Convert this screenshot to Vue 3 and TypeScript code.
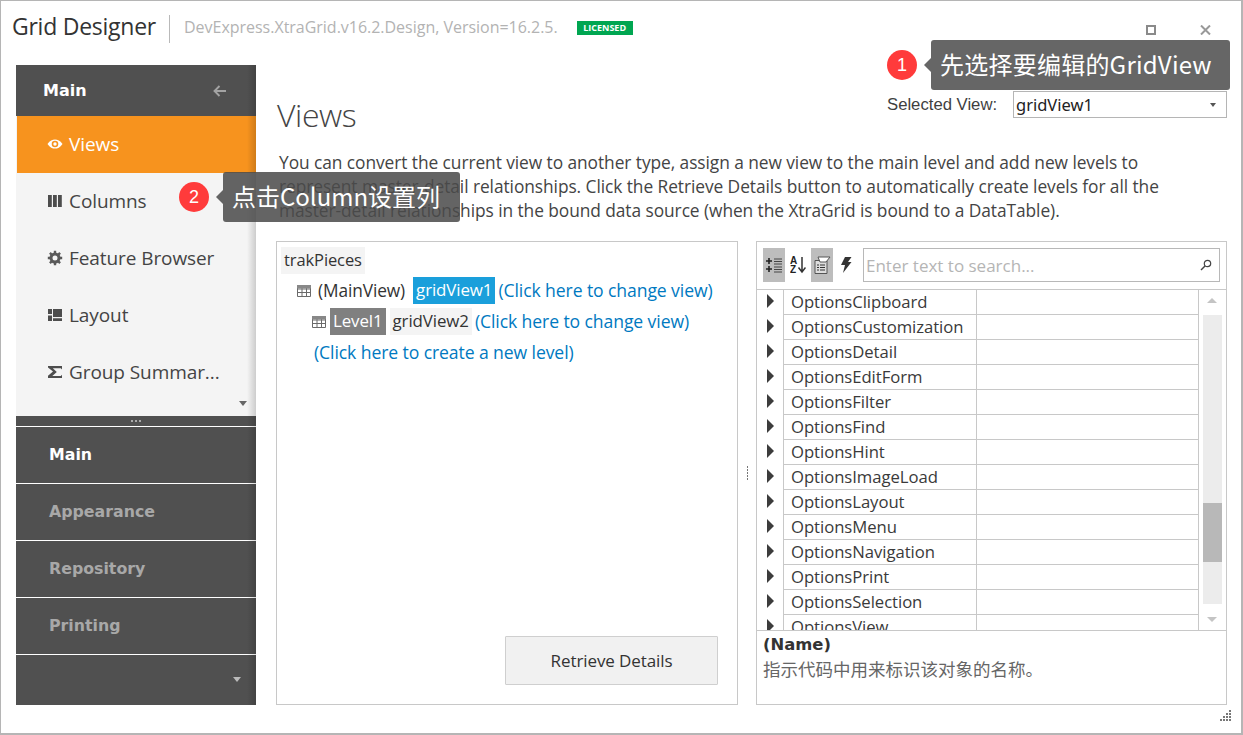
<script setup lang="ts">
const navItems = [
  { label: 'Views', icon: 'eye', active: true },
  { label: 'Columns', icon: 'cols', active: false },
  { label: 'Feature Browser', icon: 'gear', active: false },
  { label: 'Layout', icon: 'layout', active: false },
  { label: 'Group Summar...', icon: 'sigma', active: false },
]
const groups = [
  { label: 'Main', on: true },
  { label: 'Appearance', on: false },
  { label: 'Repository', on: false },
  { label: 'Printing', on: false },
]
const props = [
  'OptionsClipboard', 'OptionsCustomization', 'OptionsDetail', 'OptionsEditForm', 'OptionsFilter',
  'OptionsFind', 'OptionsHint', 'OptionsImageLoad', 'OptionsLayout', 'OptionsMenu',
  'OptionsNavigation', 'OptionsPrint', 'OptionsSelection', 'OptionsView',
]
</script>

<template>
  <div class="window">
    <header class="titlebar">
      <h1 class="app-title">Grid Designer</h1>
      <span class="title-sep"></span>
      <span class="version">DevExpress.XtraGrid.v16.2.Design, Version=16.2.5.</span>
      <span class="licensed">LICENSED</span>
      <div class="win-btns">
        <svg width="10" height="10" viewBox="0 0 10 10"><rect x="1" y="1" width="8" height="8" fill="none" stroke="#8a8a8a" stroke-width="2" /></svg>
        <svg width="11" height="10" viewBox="0 0 11 10"><path d="M1 .5l9 9M10 .5l-9 9" stroke="#999" stroke-width="2" fill="none" /></svg>
      </div>
    </header>

    <div class="body">
      <aside class="sidebar">
        <div class="side-head">
          <span>Main</span>
          <svg width="14" height="12" viewBox="0 0 14 12"><path d="M13 6H2M6.500 1 1.500 6l5 5" fill="none" stroke="#a3a3a3" stroke-width="1.900" /></svg>
        </div>
        <nav class="nav">
          <div v-for="it in navItems" :key="it.label" class="nav-item" :class="{ active: it.active }">
            <svg class="nav-icon" width="16" height="16" viewBox="0 0 16 16">
              <template v-if="it.icon === 'eye'">
                <path d="M.5 8C3 4.300 5.500 3.400 8 3.400S13 4.300 15.500 8C13 11.700 10.500 12.600 8 12.600S3 11.700.5 8Z" fill="#fff" />
                <circle cx="8" cy="8" r="3.300" fill="#f7931e" /><circle cx="8" cy="8" r="1.700" fill="#fff" />
              </template>
              <path v-else-if="it.icon === 'cols'" d="M1 2h3.800v12H1zM6 2h3.800v12H6zM11 2h3.800v12H11z" fill="#4d4d4d" />
              <template v-else-if="it.icon === 'gear'">
                <circle cx="8" cy="8" r="4" fill="none" stroke="#595959" stroke-width="3" />
                <path d="M8 .8v3M8 12.200v3M.8 8h3M12.200 8h3M2.900 2.900 5 5M11 11l2.100 2.100M13.100 2.900 11 5M5 11l-2.100 2.100" stroke="#595959" stroke-width="2.400" />
              </template>
              <path v-else-if="it.icon === 'layout'" d="M1 2h4v5H1zM6 2h9v8H6zM1 8.500h4V14H1zM6 11.300h9V14H6z" fill="#4d4d4d" />
              <path v-else d="M1 2h14v3.500l-1.200-1.300H5.800L9.800 8l-4.500 4h8.500l1.200-1.200V14H1v-2.200l5-4.300L1 3.500z" fill="#4d4d4d" />
            </svg>
            <span>{{ it.label }}</span>
          </div>
          <i class="nav-more"></i>
        </nav>
        <div class="splitter">
          <span></span><span></span><span></span>
        </div>
        <div v-for="g in groups" :key="g.label" class="group" :class="{ on: g.on }">{{ g.label }}</div>
        <div class="side-foot"><i></i></div>
      </aside>

      <main class="content">
        <div class="content-top">
          <h2 class="page-title">Views</h2>
          <div class="selector">
            <label>Selected View:</label>
            <div class="combo"><span>gridView1</span><i></i></div>
          </div>
        </div>
        <p class="desc">You can convert the current view to another type, assign a new view to the main level and add new levels to represent master-detail relationships. Click the Retrieve Details button to automatically create levels for all the master-detail relationships in the bound data source (when the XtraGrid is bound to a DataTable).</p>

        <div class="panels">
          <section class="tree-panel">
            <div class="tree-row first"><span class="chip plain root">trakPieces</span></div>
            <div class="tree-row indent1">
              <svg class="grid-ic" width="14" height="12" viewBox="0 0 14 12"><path d="M.5.5h13v11H.5zM.5 4h13M.5 7.500h13M5 .5v11M9.500.5v11" fill="none" stroke="#6a6a6a" /><path d="M0 0h14v3.500H0z" fill="#888" /></svg>
              <span class="tree-text">(MainView)</span>
              <span class="chip sel">gridView1</span>
              <a class="link">(Click here to change view)</a>
            </div>
            <div class="tree-row indent2">
              <svg class="grid-ic" width="14" height="12" viewBox="0 0 14 12"><path d="M.5.5h13v11H.5zM.5 4h13M.5 7.500h13M5 .5v11M9.500.5v11" fill="none" stroke="#6a6a6a" /><path d="M0 0h14v3.500H0z" fill="#888" /></svg>
              <span class="chip level">Level1</span>
              <span class="chip plain">gridView2</span>
              <a class="link">(Click here to change view)</a>
            </div>
            <div class="tree-row indent3"><a class="link">(Click here to create a new level)</a></div>
            <button class="retrieve">Retrieve Details</button>
          </section>

          <div class="panel-grip">
            <span></span><span></span><span></span><span></span><span></span>
          </div>

          <section class="prop-panel">
            <div class="prop-tools">
              <span class="tool on">
                <svg width="16" height="16" viewBox="0 0 16 16"><path d="M0 4h6M3 1v6M0 12h6M3 9v6" stroke="#222" stroke-width="1.600" /><path d="M8 2h8M8 4.500h8M8 7h8M8 10h8M8 12.500h8M8 15h8" stroke="#444" /></svg>
              </span>
              <span class="tool">
                <svg width="16" height="18" viewBox="0 0 16 18"><text x="0" y="8" class="az">A</text><text x="0" y="17" class="az">Z</text><path d="M12 1v14M8.500 11.500 12 16l3.500-4.500" fill="none" stroke="#333" stroke-width="1.500" /></svg>
              </span>
              <span class="tool on">
                <svg width="18" height="18" viewBox="0 0 18 18"><path d="M2 4.500h12v13H2z" fill="#ddd" stroke="#555" /><path d="M5 1h8l4 0-4 5H7z" fill="#fff" stroke="#555" /><path d="M4 9h2M7 9h5M4 11.500h2M7 11.500h5M4 14h2M7 14h5" stroke="#333" /></svg>
              </span>
              <span class="tool">
                <svg width="12" height="16" viewBox="0 0 12 16"><path d="M5 0h6.500L8 5h3.500L3 16l2-8H1z" fill="#333" /></svg>
              </span>
              <div class="search">
                <span>Enter text to search...</span>
                <svg width="12" height="12" viewBox="0 0 12 12"><circle cx="7.500" cy="4.500" r="3.200" fill="none" stroke="#444" stroke-width="1.200" /><path d="M5 7 1 11" stroke="#444" stroke-width="1.400" /></svg>
              </div>
            </div>
            <div class="prop-grid">
              <div class="rows">
                <div v-for="p in props" :key="p" class="row">
                  <span class="arrow-cell"><i></i></span>
                  <span class="name-cell">{{ p }}</span>
                  <span class="val-cell"></span>
                </div>
              </div>
              <div class="scroll">
                <i class="sc-up"></i>
                <div class="sc-track"><div class="sc-thumb"></div></div>
                <i class="sc-down"></i>
              </div>
            </div>
            <div class="prop-desc">
              <strong>(Name)</strong>
              <span>指示代码中用来标识该对象的名称。</span>
            </div>
          </section>
        </div>
      </main>
    </div>

    <svg class="resize" width="12" height="12" viewBox="0 0 12 12"><path d="M9 0h2v2H9zM6 3h2v2H6zM9 3h2v2H9zM3 6h2v2H3zM6 6h2v2H6zM9 6h2v2H9zM0 9h2v2H0zM3 9h2v2H3zM6 9h2v2H6zM9 9h2v2H9z" fill="#777" /></svg>

    <div class="note note1">
      <b class="badge">1</b>
      <div class="tip">先选择要编辑的GridView</div>
    </div>
    <div class="note note2">
      <b class="badge">2</b>
      <div class="tip tip-soft">点击Column设置列</div>
    </div>
  </div>
</template>

<style>
html, body { margin: 0; background: #fff; }
</style>

<style scoped>
* { box-sizing: border-box; }
.window {
  position: relative; width: 1243px; height: 735px; overflow: hidden;
  border: 1px solid #b5b5b5; border-width: 1px 2px 2px 1px; background: #fff;
  font-family: "Open Sans", "Noto Sans CJK SC", sans-serif; color: #3a3a3a;
}
.titlebar { height: 64px; display: flex; align-items: flex-start; padding: 12px 0 0 11px; }
.app-title { margin: -1px 0 0; font-size: 23px; font-weight: 400; line-height: 28px; letter-spacing: -.25px; color: #333; }
.title-sep { width: 1px; height: 28px; margin: 2px 14px 0 13px; background: #b9b9b9; }
.version { font-size: 16px; line-height: 28px; color: #b3b3b3; letter-spacing: -.02px; }
.licensed { margin: 8px 0 0 19px; width: 56px; height: 14px; background: #00a651; color: #fff; font: 700 9px/14px "Open Sans", sans-serif; text-align: center; }
.win-btns { margin-left: auto; margin-right: 30px; margin-top: 12px; display: flex; gap: 44px; }

.body { display: flex; height: 640px; padding-left: 15px; }
.sidebar { position: relative; width: 240px; flex: none; background: #505050; display: flex; flex-direction: column; }
.sidebar::after { content: ""; position: absolute; top: 0; bottom: 0; right: 0; width: 9px; background: linear-gradient(90deg, rgba(0,0,0,0), rgba(0,0,0,.16)); pointer-events: none; }
.side-head { height: 51px; flex: none; display: flex; align-items: center; justify-content: space-between; padding: 0 29px 0 27px; color: #fff; font: 700 16px "DejaVu Sans", sans-serif; }
.nav { position: relative; height: 300px; flex: none; background: #f4f4f4; }
.nav-item { height: 57px; display: flex; align-items: center; gap: 6px; padding: 0 0 2px 31px; font-size: 19px; letter-spacing: -.08px; color: #444; }
.nav-item.active { background: #f7931e; color: #fff; margin-left: 1px; padding-left: 30px; }
.nav-icon { flex: none; }
.nav-more { position: absolute; right: 9px; bottom: 10px; border: 4px solid transparent; border-top: 5px solid #666; border-bottom: 0; }
.splitter { height: 11px; flex: none; border-bottom: 1px solid #fff; display: flex; justify-content: center; gap: 2px; padding-top: 4px; }
.splitter span { width: 2px; height: 2px; background: #aaa; }
.group { height: 57px; flex: none; border-bottom: 1px solid #fff; display: flex; align-items: center; padding: 0 0 2px 33px; font: 700 15.800px "DejaVu Sans", sans-serif; color: #a8a8a8; }
.group.on { color: #fff; }
.side-foot { flex: 1; position: relative; }
.side-foot i { position: absolute; right: 15px; top: 22px; border: 4px solid transparent; border-top: 5px solid #bbb; border-bottom: 0; }

.content { flex: 1; min-width: 0; padding-left: 20px; padding-right: 14px; display: flex; flex-direction: column; }
.content-top { height: 75px; display: flex; justify-content: space-between; }
.page-title { margin: 29px 0 0 1px; font-size: 32px; line-height: 42px; font-weight: 300; letter-spacing: -.4px; color: #444; }
.selector { display: flex; align-items: center; height: 27px; margin-top: 26px; }
.selector label { font: 16.700px "Liberation Sans", sans-serif; width: 126px; color: #3f3f3f; }
.combo { width: 214px; height: 27px; border: 1px solid #b5b5b5; display: flex; align-items: center; justify-content: space-between; padding: 0 10px 0 2px; font: 16.500px "Noto Sans", sans-serif; color: #222; }
.combo i { border: 3.500px solid transparent; border-top: 4px solid #555; border-bottom: 0; }
.desc { margin: 10px 0 0 3px; width: 885px; font-size: 17.350px; line-height: 24px; letter-spacing: -.07px; color: #444; height: 79px; }
.panels { display: flex; margin-top: 12px; height: 464px; }

.tree-panel { position: relative; width: 462px; height: 464px; border: 1px solid #c8c8c8; padding: 3px 0 0 4px; font-size: 17.300px; letter-spacing: -.1px; color: #333; }
.tree-row { height: 31px; display: flex; align-items: center; white-space: nowrap; }
.tree-row.first { height: 30px; }
.indent1 { padding-left: 16px; }
.indent2 { padding-left: 31px; }
.indent3 { padding-left: 33px; }
.grid-ic { flex: none; }
.chip { display: inline-block; height: 27px; line-height: 26px; padding: 0 3px; font-size: 16.900px; }
.root { font-size: 16.500px; }
.plain { background: #f4f4f4; }
.sel { background: #1a9fdb; color: #fff; margin: 0 3px 0 8px; }
.level { background: #808080; color: #fff; margin: 0 4px 0 4px; }
.tree-text { margin-left: 7px; }
.link { color: #0079c1; font-size: 17.600px; margin-bottom: 2px; }
.tree-row .plain + .link { margin-left: 3px; }
.retrieve { position: absolute; left: 228px; top: 394px; width: 213px; height: 49px; padding-bottom: 1px; border: 1px solid #cfcfcf; background: #f1f1f1; font: 17px "Open Sans", sans-serif; color: #333; letter-spacing: -.1px; border-radius: 1px; }

.panel-grip { width: 18px; display: flex; flex-direction: column; align-items: center; justify-content: center; gap: 1px; }
.panel-grip span { width: 1px; height: 2px; background: #777; }

.prop-panel { width: 471px; height: 464px; display: flex; flex-direction: column; border: 1px solid #c8c8c8; }
.prop-tools { height: 48px; flex: none; display: flex; align-items: center; padding: 0 6px 1px; border-bottom: 1px solid #c8c8c8; }
.tool { width: 22px; height: 34px; margin-right: 2px; display: flex; align-items: center; justify-content: center; }
.tool.on { background: #bdbdbd; }
.az { font: 700 10px "Liberation Sans", sans-serif; fill: #222; }
.search { margin-left: 4px; width: 357px; height: 34px; border: 1px solid #b8b8b8; display: flex; align-items: center; justify-content: space-between; padding: 0 7px 0 2px; font-size: 17px; color: #b5b5b5; }
.prop-grid { height: 340px; flex: none; display: flex; overflow: hidden; }
.rows { width: 442px; flex: none; border-right: 1px solid #c8c8c8; }
.row { display: flex; height: 25px; align-items: stretch; }
.arrow-cell { width: 27px; flex: none; border-right: 1px solid #c8c8c8; display: flex; align-items: center; padding: 0 0 3px 10px; }
.arrow-cell i { border: 6px solid transparent; border-left: 7px solid #3c3c3c; border-right: 0; border-width: 7px 0 7px 7px; }
.name-cell { width: 193px; flex: none; border-right: 1px solid #c8c8c8; border-bottom: 1px solid #c8c8c8; padding-left: 7px; font-size: 16.700px; line-height: 24px; letter-spacing: -.05px; color: #3a3a3a; }
.val-cell { flex: 1; border-bottom: 1px solid #c8c8c8; }
.scroll { flex: 1; position: relative; }
.sc-up, .sc-down { position: absolute; left: 8px; border: 6px solid transparent; border-width: 0 5px; }
.sc-up { top: 8px; border-bottom: 5px solid #c4c4c4; }
.sc-down { bottom: 8px; border-top: 5px solid #c4c4c4; }
.sc-track { position: absolute; left: 4px; right: 4px; top: 25px; height: 289px; background: #ececec; }
.sc-thumb { position: absolute; left: 0; right: 0; top: 188px; height: 59px; background: #b8b8b8; }
.prop-desc { flex: 1; border-top: 1px solid #c8c8c8; padding: 3px 0 0 6px; display: flex; flex-direction: column; }
.prop-desc strong { font: 700 16.400px/21px "DejaVu Sans", sans-serif; color: #333; }
.prop-desc span { font: 17.500px/27px "Noto Sans CJK SC", sans-serif; color: #666; }

.resize { position: absolute; right: 9px; bottom: 11px; }

.note { position: absolute; display: flex; align-items: center; }
.note1 { left: 886px; top: 39px; }
.note2 { left: 178px; top: 171px; }
.badge { width: 30px; height: 30px; border-radius: 50%; background: #ff3b3b; color: #fff; font: 400 18px/30px "Liberation Sans", sans-serif; text-align: center; margin-right: 14px; flex: none; }
.tip { position: relative; height: 50px; padding: 0 18px 0 9px; background: #666; color: #fff; border-radius: 3px; font: 400 24px/48px "Noto Sans CJK SC", sans-serif; letter-spacing: .23px; white-space: nowrap; }
.tip::before { content: ""; position: absolute; left: -7px; top: 18px; border-top: 7px solid transparent; border-bottom: 7px solid transparent; border-right: 7px solid #666; }
.tip-soft { background: rgba(75, 75, 75, .86); padding-right: 20px; letter-spacing: 0; }
.tip-soft::before { border-right-color: rgba(75, 75, 75, .86); }
</style>
